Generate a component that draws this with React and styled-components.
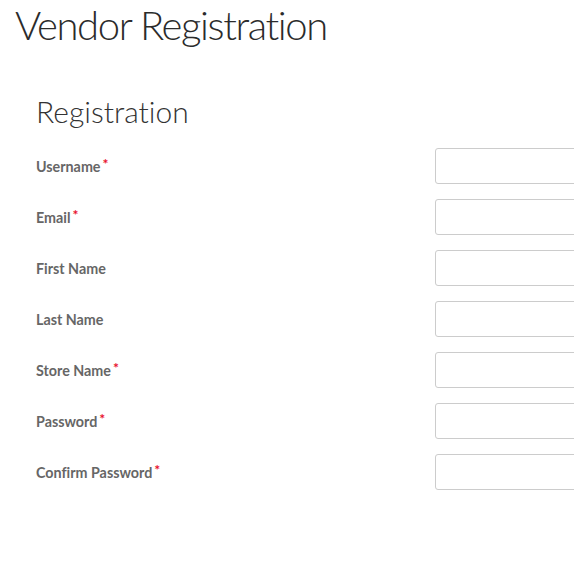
import React from 'react'
import styled, { createGlobalStyle } from 'styled-components'

const GlobalStyle = createGlobalStyle`
  html, body {
    margin: 0;
    padding: 0;
    background: #fff;
    overflow: hidden;
  }
  body {
    font-family: Lato, "Open Sans", sans-serif;
    font-variant-ligatures: none;
    color: #333;
  }
`

const Page = styled.div`
  width: 574px;
  height: 574px;
  padding: 0 0 0 15px;
  box-sizing: border-box;
  overflow: hidden;
`

const PageTitle = styled.h1`
  margin: 0;
  font-weight: 300;
  font-size: 40px;
  line-height: 50px;
  letter-spacing: -1.4px;
  color: #2b2b2b;
  white-space: nowrap;
`

const Section = styled.section`
  padding: 43px 0 0 21px;
`

const SectionTitle = styled.h2`
  margin: 0 0 19px;
  font-weight: 300;
  font-size: 30px;
  line-height: 36px;
  color: #333;
  white-space: nowrap;
`

const Form = styled.form`
  display: flex;
  flex-direction: column;
  gap: 15px;
`

const Row = styled.div`
  display: grid;
  grid-template-columns: 399px 300px;
  align-items: center;
  height: 36px;
`

const Label = styled.label`
  font-weight: 700;
  font-size: 14.3px;
  color: #666;
  white-space: nowrap;
`

const Required = styled.span`
  color: #e8112d;
  font-size: 14px;
  margin-left: 2px;
  vertical-align: 3px;
  line-height: 0;
`

const Input = styled.input`
  box-sizing: border-box;
  width: 300px;
  height: 36px;
  border: 1px solid #ccc;
  border-radius: 3px;
  background: #fff;
  outline: none;
`

const fields = [
  { label: 'Username', required: true, type: 'text' },
  { label: 'Email', required: true, type: 'email' },
  { label: 'First Name', required: false, type: 'text' },
  { label: 'Last Name', required: false, type: 'text' },
  { label: 'Store Name', required: true, type: 'text' },
  { label: 'Password', required: true, type: 'password' },
  { label: 'Confirm Password', required: true, type: 'password' },
]

const App = () => (
  <>
    <GlobalStyle />
    <Page>
      <PageTitle>Vendor Registration</PageTitle>
      <Section>
        <SectionTitle>Registration</SectionTitle>
        <Form>
          {fields.map(f => (
            <Row key={f.label}>
              <Label>
                {f.label}
                {f.required && <Required>*</Required>}
              </Label>
              <Input type={f.type} />
            </Row>
          ))}
        </Form>
      </Section>
    </Page>
  </>
)

export default App
